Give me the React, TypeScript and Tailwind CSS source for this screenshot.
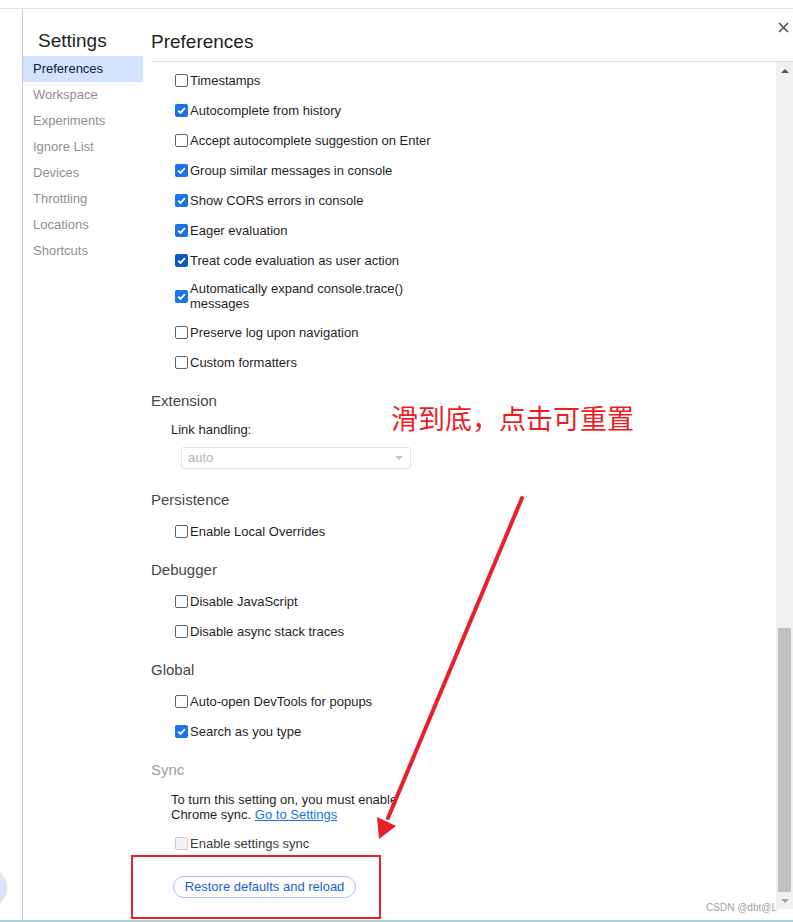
import type { ReactNode } from 'react';

type BoxState = 'on' | 'on-focus' | 'off' | 'disabled';

function Box({ state }: { state: BoxState }) {
  if (state === 'on' || state === 'on-focus') {
    return (
      <span
        className={`w-[13px] h-[13px] shrink-0 rounded-[2px] flex items-center justify-center ${
          state === 'on-focus' ? 'bg-[#0b57d0]' : 'bg-[#1a73e8]'
        }`}
      >
        <svg viewBox="0 0 12 12" className="w-[11px] h-[11px]">
          <path d="M2.4 6.3 L4.9 8.7 L9.7 3.4" stroke="white" strokeWidth="2" fill="none" />
        </svg>
      </span>
    );
  }
  if (state === 'disabled') {
    return <span className="w-[13px] h-[13px] shrink-0 rounded-[2px] border border-[#cbcbcb] bg-[#f4f4f4]" />;
  }
  return <span className="w-[13px] h-[13px] shrink-0 rounded-[2px] border border-[#5f6368] bg-white" />;
}

function Row({ state, children, tall }: { state: BoxState; children: ReactNode; tall?: boolean }) {
  return (
    <div className={`pl-[24px] flex items-center gap-[2px] ${tall ? 'h-[42px]' : 'h-[30px]'}`}>
      <Box state={state} />
      <span className={`leading-[15px] ${state === 'disabled' ? 'text-[#3c3c3c]' : ''}`}>{children}</span>
    </div>
  );
}

function Section({ title, muted }: { title: string; muted?: boolean }) {
  return (
    <h3
      className={`mt-[14px] mb-[6px] h-[20px] leading-[20px] text-[15px] ${
        muted ? 'text-[#9e9e9e]' : 'text-[#474747]'
      }`}
    >
      {title}
    </h3>
  );
}

const navItems = ['Workspace', 'Experiments', 'Ignore List', 'Devices', 'Throttling', 'Locations', 'Shortcuts'];

export default function App() {
  return (
    <div className="relative w-[793px] h-[922px] overflow-hidden bg-white font-['Liberation_Sans',Arial,sans-serif] text-[13px] text-[#1f1f1f]">
      <div className="h-[9px] border-b border-[#e3e3e3]" />

      <div className="flex h-[911px]">
        <div className="w-[23px] border-r border-[#c2cde3]" />

        {/* Sidebar */}
        <aside className="w-[120px]">
          <h1 className="pl-[15px] mt-[21px] mb-[4px] leading-[22px] text-[19px] text-[#1f1f1f]">Settings</h1>
          <div className="h-[26px] leading-[26px] pl-[10px] bg-[#d3e3fd] text-[#0a1d3f]">Preferences</div>
          {navItems.map((item) => (
            <div key={item} className="h-[26px] leading-[26px] pl-[10px] text-[#8f8f8f]">
              {item}
            </div>
          ))}
        </aside>

        {/* Main */}
        <main className="flex-1 flex flex-col pl-[8px]">
          <header className="h-[53px] border-b border-[#d5deef] flex justify-between">
            <h2 className="mt-[22px] leading-[22px] text-[19px] text-[#1f1f1f]">Preferences</h2>
            <svg viewBox="0 0 11 11" className="w-[11px] h-[11px] mt-[13px] mr-[4px]">
              <path d="M1 1 L10 10 M10 1 L1 10" stroke="#4a4a4a" strokeWidth="1.5" />
            </svg>
          </header>

          <div className="flex flex-1">
            <div className="flex-1 flex flex-col items-start pt-[3px]">
              <Row state="off">Timestamps</Row>
              <Row state="on">Autocomplete from history</Row>
              <Row state="off">Accept autocomplete suggestion on Enter</Row>
              <Row state="on">Group similar messages in console</Row>
              <Row state="on">Show CORS errors in console</Row>
              <Row state="on">Eager evaluation</Row>
              <Row state="on-focus">Treat code evaluation as user action</Row>
              <Row state="on" tall>
                Automatically expand console.trace()
                <br />
                messages
              </Row>
              <Row state="off">Preserve log upon navigation</Row>
              <Row state="off">Custom formatters</Row>

              <Section title="Extension" />
              <div className="pl-[20px] h-[26px] leading-[26px]">Link handling:</div>
              <div className="ml-[30px] mt-[4px] mb-[7px] h-[22px] w-[230px] rounded-[3px] border border-[#e2e2e2] flex items-center justify-between px-[6px]">
                <span className="text-[#b3b3b3]">auto</span>
                <span className="w-0 h-0 border-l-[4px] border-r-[4px] border-t-[4px] border-l-transparent border-r-transparent border-t-[#c4c4c4] mr-[1px]" />
              </div>

              <Section title="Persistence" />
              <Row state="off">Enable Local Overrides</Row>

              <Section title="Debugger" />
              <Row state="off">Disable JavaScript</Row>
              <Row state="off">Disable async stack traces</Row>

              <Section title="Global" />
              <Row state="off">Auto-open DevTools for popups</Row>
              <Row state="on">Search as you type</Row>

              <Section title="Sync" muted />
              <p className="pl-[20px] mt-[6px] leading-[15px]">
                To turn this setting on, you must enable
                <br />
                Chrome sync.{' '}
                <a className="text-[#1a73e8] underline">Go to Settings</a>
              </p>
              <div className="mt-[6px]">
                <Row state="disabled">Enable settings sync</Row>
              </div>
              <button className="mt-[18px] ml-[22px] h-[22px] w-[183px] rounded-full border border-[#a9c4f2] text-[#1a5fd0] leading-[20px]">
                Restore defaults and reload
              </button>
            </div>

            {/* Scrollbar */}
            <div className="w-[17px] flex flex-col">
              <div className="h-[847px] bg-[#f1f1f1] flex flex-col">
                <div className="h-[17px] flex items-center justify-center">
                  <span className="w-0 h-0 border-l-[4px] border-r-[4px] border-b-[4px] border-l-transparent border-r-transparent border-b-[#505050]" />
                </div>
                <div className="h-[549px]" />
                <div className="mx-[2px] h-[264px] bg-[#c1c1c1]" />
                <div className="h-[17px] flex items-center justify-center">
                  <span className="w-0 h-0 border-l-[4px] border-r-[4px] border-t-[4px] border-l-transparent border-r-transparent border-t-[#a3a3a3]" />
                </div>
              </div>
            </div>
          </div>
        </main>
      </div>

      <div className="h-[2px] bg-[#a9d3d6]" />

      {/* floating button peeking at the left edge */}
      <div className="absolute left-[-32px] top-[868px] w-[38px] h-[38px] rounded-full bg-[#dbe6fb] shadow-[0_1px_3px_rgba(0,0,0,0.25)]" />

      {/* red annotation */}
      <div className="absolute left-[391px] top-[402px] text-[27px] leading-[32px] text-[#ee1d25] font-['Noto_Sans_CJK_SC',sans-serif]">
        滑到底，点击可重置
      </div>
      <div className="absolute left-[131px] top-[855px] w-[250px] h-[64px] border-2 border-[#e8202a]" />
      <svg className="absolute inset-0 w-[793px] h-[922px] pointer-events-none" viewBox="0 0 793 922">
        <line x1="522" y1="498" x2="388" y2="818" stroke="#e8202a" strokeWidth="4" strokeLinecap="round" />
        <polygon points="379,839 377,817 396,826" fill="#e8202a" />
      </svg>

      <div className="absolute right-[16px] top-[901px] text-[10px] leading-[14px] text-[#a3a3a3]">CSDN @dbt@L</div>
    </div>
  );
}
